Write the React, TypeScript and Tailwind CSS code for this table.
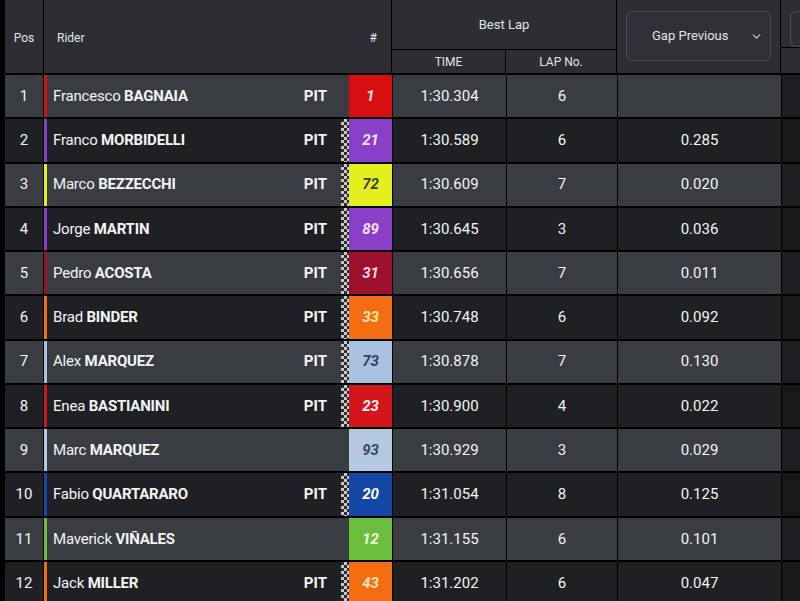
import { ChevronDown } from "lucide-react";

type Rider = {
  pos: number;
  first: string;
  last: string;
  pit: boolean;
  flag: boolean;
  num: string;
  color: string;
  numColor: string;
  time: string;
  lap: string;
  gap: string;
};

const riders: Rider[] = [
  { pos: 1, first: "Francesco", last: "BAGNAIA", pit: true, flag: false, num: "1", color: "#d80f10", numColor: "#fde6e6", time: "1:30.304", lap: "6", gap: "" },
  { pos: 2, first: "Franco", last: "MORBIDELLI", pit: true, flag: true, num: "21", color: "#8a3fc8", numColor: "#f3e2ff", time: "1:30.589", lap: "6", gap: "0.285" },
  { pos: 3, first: "Marco", last: "BEZZECCHI", pit: true, flag: true, num: "72", color: "#e4f01e", numColor: "#3d3f1c", time: "1:30.609", lap: "7", gap: "0.020" },
  { pos: 4, first: "Jorge", last: "MARTIN", pit: true, flag: true, num: "89", color: "#8a3fc8", numColor: "#f3e2ff", time: "1:30.645", lap: "3", gap: "0.036" },
  { pos: 5, first: "Pedro", last: "ACOSTA", pit: true, flag: true, num: "31", color: "#9e102b", numColor: "#ffdbe4", time: "1:30.656", lap: "7", gap: "0.011" },
  { pos: 6, first: "Brad", last: "BINDER", pit: true, flag: true, num: "33", color: "#f36d12", numColor: "#ffe9a6", time: "1:30.748", lap: "6", gap: "0.092" },
  { pos: 7, first: "Alex", last: "MARQUEZ", pit: true, flag: true, num: "73", color: "#a9c0e0", numColor: "#2f3f5f", time: "1:30.878", lap: "7", gap: "0.130" },
  { pos: 8, first: "Enea", last: "BASTIANINI", pit: true, flag: true, num: "23", color: "#d3161c", numColor: "#fff0f0", time: "1:30.900", lap: "4", gap: "0.022" },
  { pos: 9, first: "Marc", last: "MARQUEZ", pit: false, flag: false, num: "93", color: "#b5c8e2", numColor: "#3a4762", time: "1:30.929", lap: "3", gap: "0.029" },
  { pos: 10, first: "Fabio", last: "QUARTARARO", pit: true, flag: true, num: "20", color: "#1446a6", numColor: "#ffffff", time: "1:31.054", lap: "8", gap: "0.125" },
  { pos: 11, first: "Maverick", last: "VIÑALES", pit: false, flag: false, num: "12", color: "#6bbd3e", numColor: "#eaffdc", time: "1:31.155", lap: "6", gap: "0.101" },
  { pos: 12, first: "Jack", last: "MILLER", pit: true, flag: true, num: "43", color: "#f36d12", numColor: "#ffe4b0", time: "1:31.202", lap: "6", gap: "0.047" },
];

function HeaderRow() {
  return (
    <div className="flex h-[73px] shrink-0 gap-px text-[12px] text-[#e4e4e4]">
      <div className="flex w-[38px] items-center justify-center bg-[#2c2e33] pt-[2px]">Pos</div>
      <div className="flex w-[347px] items-center justify-between bg-[#2c2e33] pl-[13px] pr-[14px] pt-[2px]">
        <span>Rider</span>
        <span>#</span>
      </div>
      <div className="flex w-[224px] flex-col gap-px">
        <div className="flex h-[49px] items-center justify-center bg-[#2c2e33] text-[13px]">Best Lap</div>
        <div className="flex flex-1 gap-px">
          <div className="flex w-[113px] items-center justify-center bg-[#2c2e33]">TIME</div>
          <div className="flex flex-1 items-center justify-center bg-[#2c2e33]">LAP No.</div>
        </div>
      </div>
      <div className="w-[163px] bg-[#2c2e33] px-[9px] pt-[11px]">
        <div className="flex h-[50px] items-center rounded-md border border-[#484b51] bg-[#2f3136] pl-[25px] text-[13px]">
          <span>Gap Previous</span>
          <ChevronDown size={13} strokeWidth={2} className="ml-[21px] text-[#d0d0d0]" />
        </div>
      </div>
      <div className="flex flex-1 flex-col gap-px">
        <div className="h-[47px] bg-[#2c2e33] pl-[9px] pt-[11px]">
          <div className="h-[36px] rounded-l-md border border-r-0 border-[#484b51]" />
        </div>
        <div className="flex-1 bg-[#2c2e33]" />
      </div>
    </div>
  );
}

function RiderRow({ r }: { r: Rider }) {
  const odd = r.pos % 2 === 1;
  const bg = odd ? "bg-[#393c41]" : "bg-[#1e2023]";
  return (
    <div className="flex h-[42.27px] shrink-0 gap-px text-[15px] text-[#f4f4f4]">
      <div className={`flex w-[38px] items-center justify-center ${bg}`}>{r.pos}</div>
      <div className={`flex w-[297px] items-center ${bg}`}>
        <div className="h-full w-[3px]" style={{ backgroundColor: r.color }} />
        <div className="flex-1 pl-[6px] tracking-[-0.2px]">
          {r.first} <span className="font-bold">{r.last}</span>
        </div>
        {r.pit ? <span className="pr-[14px] font-bold">PIT</span> : null}
      </div>
      <div className={`-ml-px flex w-[51px] ${bg}`}>
        <div className="w-[8px]">
          {r.flag ? (
            <div className="h-full w-full bg-[conic-gradient(#c9c9c9_25%,#2b2c2f_0_50%,#c9c9c9_0_75%,#2b2c2f_0)] bg-[length:6px_6px]" />
          ) : null}
        </div>
        <div
          className="flex flex-1 items-center justify-center font-bold italic"
          style={{ backgroundColor: r.color, color: r.numColor }}
        >
          {r.num}
        </div>
      </div>
      <div className={`flex w-[113px] items-center justify-center ${bg}`}>{r.time}</div>
      <div className={`flex w-[110px] items-center justify-center ${bg}`}>{r.lap}</div>
      <div className={`flex w-[163px] items-center justify-center ${bg}`}>{r.gap}</div>
      <div className={`flex-1 ${odd ? "bg-[#1d1e21]" : "bg-[#17181a]"}`} />
    </div>
  );
}

export default function App() {
  return (
    <div className="flex h-[601px] w-[800px] flex-col gap-[2px] overflow-hidden bg-black pl-[5px] font-['Roboto',sans-serif]">
      <HeaderRow />
      {riders.map((r) => (
        <RiderRow key={r.pos} r={r} />
      ))}
    </div>
  );
}
